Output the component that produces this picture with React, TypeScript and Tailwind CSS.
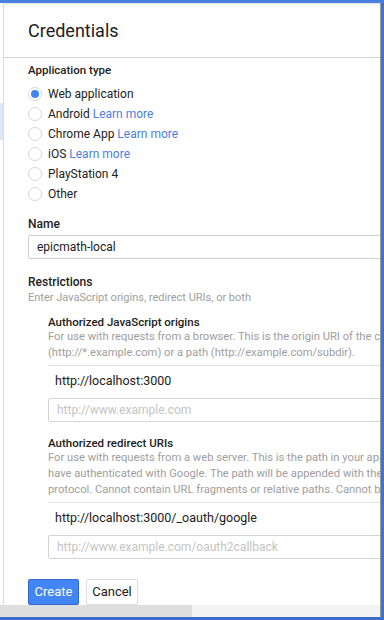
import React from 'react'

const TYPES = [
  { label: 'Web application', checked: true },
  { label: 'Android', link: true },
  { label: 'Chrome App', link: true },
  { label: 'iOS', link: true },
  { label: 'PlayStation 4' },
  { label: 'Other' },
]

function Radio({ checked }: { checked?: boolean }) {
  return (
    <span className="w-[14px] h-[14px] rounded-full border border-[#d6d6d6] bg-white flex items-center justify-center shrink-0">
      {checked && <span className="w-[8px] h-[8px] rounded-full bg-[#4285f4]" />}
    </span>
  )
}

function UriSection({ title, lines, value, placeholder }: { title: string; lines: string[]; value: string; placeholder: string }) {
  return (
    <div className="pl-[20px]">
      <div className="text-[11.5px] leading-[14px] font-medium text-[#212121]">{title}</div>
      <div className="text-[11.2px] leading-[16px] text-[#9e9e9e]">
        {lines.map((l) => <div key={l} className="whitespace-nowrap">{l}</div>)}
      </div>
      <div className="mt-[4px] h-px bg-[#e0e0e0]" />
      <div className="h-[30px] flex items-center pl-[7px] text-[12.5px] text-[#212121]">{value}</div>
      <div className="mt-[2px] h-[24px] border border-[#d3d3d3] rounded-[2px] flex items-center pl-[8px] text-[12px] text-[#c4c4c4]">
        {placeholder}
      </div>
    </div>
  )
}

export default function App() {
  return (
    <div className="w-[384px] h-[620px] overflow-hidden bg-white flex flex-col font-['Roboto',sans-serif]">
      <div className="h-[3px] bg-[#4a7fe2] shrink-0" />
      <div className="flex-1 flex min-h-0">
        <div className="w-[3px] shrink-0">
          <div className="mt-[100px] h-[37px] bg-[#dbe6f7]" />
        </div>
        <div className="w-px bg-[#dcdcdc] shrink-0" />
        <div className="flex-1 min-w-0 overflow-hidden flex flex-col">
          <div className="h-[55px] shrink-0 flex items-center pl-[24px] border-b border-[#d0d0d0] bg-gradient-to-b from-[#e4e4e4] via-white to-white bg-[length:100%_5px] bg-no-repeat">
            <span className="text-[18px] text-[#212121]">Credentials</span>
          </div>
          <div className="w-[580px] pl-[24px] pt-[4px]">
            <div className="text-[11.5px] leading-[16px] font-medium text-[#212121]">Application type</div>
            <div className="mt-[6px]">
              {TYPES.map((t) => (
                <div key={t.label} className="h-[20px] flex items-center gap-[6px] text-[12px] text-[#212121]">
                  <Radio checked={t.checked} />
                  <span>
                    {t.label}
                    {t.link && <span className="text-[#4a7fe2]"> Learn more</span>}
                  </span>
                </div>
              ))}
            </div>
            <div className="mt-[12px] text-[12px] leading-[16px] font-medium text-[#212121]">Name</div>
            <div className="mt-[3px] h-[24px] border border-[#cfcfcf] rounded-[2px] flex items-center pl-[8px] text-[12px] text-[#212121]">
              epicmath-local
            </div>
            <div className="mt-[15px] text-[12px] leading-[16px] font-medium text-[#212121]">Restrictions</div>
            <div className="text-[11px] leading-[16px] text-[#9e9e9e]">Enter JavaScript origins, redirect URIs, or both</div>
            <div className="mt-[9px]">
              <UriSection
                title="Authorized JavaScript origins"
                lines={[
                  'For use with requests from a browser. This is the origin URI of the client application. It can\u2019t contain a wildcard',
                  '(http://*.example.com) or a path (http://example.com/subdir).',
                ]}
                value="http://localhost:3000"
                placeholder="http://www.example.com"
              />
            </div>
            <div className="mt-[14px]">
              <UriSection
                title="Authorized redirect URIs"
                lines={[
                  'For use with requests from a web server. This is the path in your application that users are redirected to after they',
                  'have authenticated with Google. The path will be appended with the authorization code for access. Must have a',
                  'protocol. Cannot contain URL fragments or relative paths. Cannot be a public IP address.',
                ]}
                value="http://localhost:3000/_oauth/google"
                placeholder="http://www.example.com/oauth2callback"
              />
            </div>
            <div className="mt-[20px] flex gap-[7px]">
              <button className="h-[26px] w-[51px] rounded-[2px] bg-[#4285f4] border border-[#3367d6] text-white text-[13px]">Create</button>
              <button className="h-[26px] w-[52px] rounded-[2px] bg-white border border-[#dcdcdc] text-[#212121] text-[13px]">Cancel</button>
            </div>
          </div>
        </div>
        <div className="w-px bg-[#9a9a9a] shrink-0" />
        <div className="w-[3px] bg-[#3d73d6] shrink-0" />
      </div>
      <div className="h-[12px] flex shrink-0">
        <div className="w-[192px] bg-[#dedede]" />
        <div className="flex-1 bg-[#f3f3f3]" />
        <div className="w-px bg-[#9a9a9a]" />
        <div className="w-[3px] bg-[#3d73d6]" />
      </div>
      <div className="h-[3px] bg-[#3d6dc8] shrink-0" />
    </div>
  )
}
